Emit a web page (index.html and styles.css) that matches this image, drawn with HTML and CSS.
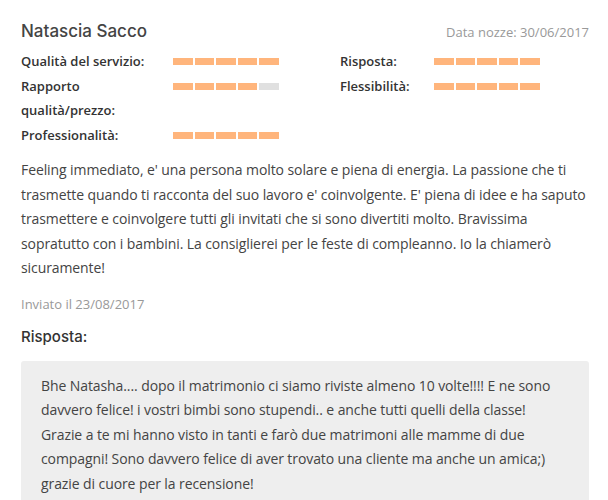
FILE: index.html
```html
<!DOCTYPE html>
<html>
<head>
    <meta charset="UTF-8">
    <title>Recensione</title>
    <link rel="stylesheet" href="styles.css">
</head>
<body>
    <div class="review">
        <div class="review-header">
            <h2 class="author">Natascia Sacco</h2>
            <span class="wedding-date">Data nozze: 30/06/2017</span>
        </div>

        <div class="ratings">
            <div class="rating-col">
                <div class="rating-row">
                    <span class="rating-label">Qualità del servizio:</span>
                    <div class="bar"><i></i><i></i><i></i><i></i><i></i></div>
                </div>
                <div class="rating-row">
                    <span class="rating-label">Rapporto qualità/prezzo:</span>
                    <div class="bar"><i></i><i></i><i></i><i></i><i class="off"></i></div>
                </div>
                <div class="rating-row">
                    <span class="rating-label">Professionalità:</span>
                    <div class="bar"><i></i><i></i><i></i><i></i><i></i></div>
                </div>
            </div>
            <div class="rating-col rating-col-right">
                <div class="rating-row">
                    <span class="rating-label">Risposta:</span>
                    <div class="bar"><i></i><i></i><i></i><i></i><i></i></div>
                </div>
                <div class="rating-row">
                    <span class="rating-label">Flessibilità:</span>
                    <div class="bar"><i></i><i></i><i></i><i></i><i></i></div>
                </div>
            </div>
        </div>

        <p class="review-text">Feeling immediato, e' una persona molto solare e piena di energia. La passione che ti trasmette quando ti racconta del suo lavoro e' coinvolgente. E' piena di idee e ha saputo trasmettere e coinvolgere tutti gli invitati che si sono divertiti molto. Bravissima sopratutto con i bambini. La consiglierei per le feste di compleanno. Io la chiamerò sicuramente!</p>

        <div class="sent-date">Inviato il 23/08/2017</div>

        <h3 class="reply-title">Risposta:</h3>
        <div class="reply-box">
            Bhe Natasha.... dopo il matrimonio ci siamo riviste almeno 10 volte!!!! E ne sono davvero felice! i vostri bimbi sono stupendi.. e anche tutti quelli della classe! Grazie a te mi hanno visto in tanti e farò due matrimoni alle mamme di due compagni! Sono davvero felice di aver trovato una cliente ma anche un amica;) grazie di cuore per la recensione!
        </div>
    </div>
</body>
</html>
```

FILE: styles.css
```css
body {
    margin: 0;
    padding: 19px 19px 0 21px;
    background: #fff;
    font-family: 'Open Sans', sans-serif;
    color: #444;
}
.review {
    display: flex;
    flex-direction: column;
}
.review-header {
    display: flex;
    justify-content: space-between;
    align-items: baseline;
}
.author {
    margin: 0;
    font-family: 'Inter', sans-serif;
    font-size: 17px;
    font-weight: 500;
    color: #444;
    line-height: 24px;
}
.wedding-date {
    font-size: 13px;
    color: #999;
}
.ratings {
    display: flex;
    margin-top: 6px;
}
.rating-col {
    width: 319px;
    flex-shrink: 0;
}
.rating-col-right {
    width: auto;
    flex-shrink: 1;
}
.rating-row {
    display: flex;
    align-items: flex-start;
    font-size: 13px;
    font-weight: 600;
    color: #333;
    line-height: 24.5px;
}
.rating-label {
    width: 140px;
    margin-right: 12px;
}
.rating-col-right .rating-label {
    width: 94px;
    margin-right: 0;
}
.bar {
    display: flex;
    gap: 2px;
    margin-top: 9px;
}
.bar i {
    display: block;
    width: 19.6px;
    height: 7px;
    background: #ffb57c;
}
.bar i.off {
    background: #e0e0e0;
}
.review-text {
    margin: 11px 0 0;
    font-size: 14px;
    line-height: 24.5px;
    letter-spacing: -0.09px;
    color: #444;
}
.sent-date {
    margin-top: 11px;
    font-size: 13px;
    color: #999;
    line-height: 24px;
}
.reply-title {
    margin: 9px 0 0;
    font-family: 'Inter', sans-serif;
    font-size: 15px;
    font-weight: 500;
    color: #333;
    line-height: 24px;
}
.reply-box {
    margin-top: 12px;
    padding: 13px 20px;
    background: #eee;
    border-radius: 3px;
    font-size: 14px;
    line-height: 24.5px;
    letter-spacing: -0.09px;
    color: #444;
}
```
